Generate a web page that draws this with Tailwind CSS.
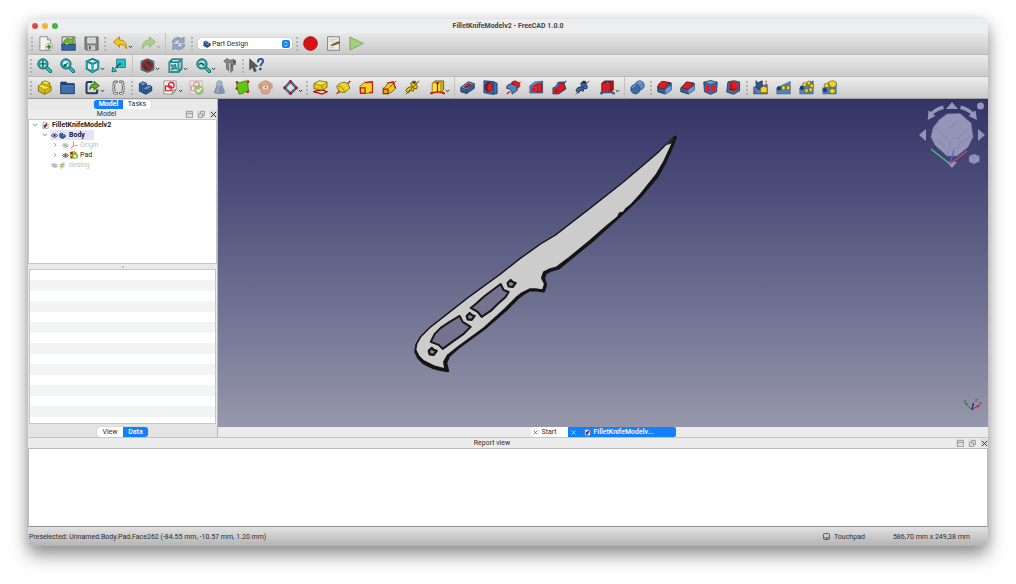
<!DOCTYPE html>
<html lang="en">
<head>
    <meta charset="UTF-8">
    <meta name="viewport" content="width=device-width, initial-scale=1.0">
    <title>FilletKnifeModelv2 - FreeCAD 1.0.0</title>
    <script src="https://cdn.jsdelivr.net/npm/@tailwindcss/browser@4"></script>
</head>
<body class="h-screen overflow-hidden bg-[#fefefe] px-7 pt-[19px] pb-[38px] font-['Roboto',sans-serif] text-[7px] leading-[10px] text-[#2e2e2e]">

    <!-- Icon set, all on a 16x16 grid -->
    <svg class="hidden" aria-hidden="true">
        <symbol id="new" viewBox="0 0 16 16"><path d="M2 .8h8l3.4 3.5v11H2z" fill="#f3f3f1" stroke="#777" stroke-width=".8"/><path d="M10 .8v3.5h3.4" fill="#ccc" stroke="#777" stroke-width=".7"/><circle cx="11.7" cy="11.5" r="3.8" fill="#e8efe2" stroke="#8a8a8a" stroke-width=".6"/><path d="M11.7 9v5M9.200 11.5h5" stroke="#457a1c" stroke-width="1.7"/></symbol>
        <symbol id="open" viewBox="0 0 16 16"><path d="M1.2 1h13.6v10H1.2z" fill="#e9ecef" stroke="#333" stroke-width=".8"/><path d="M2.5 8C3.500 2.2 7.500 1.5 10 3.800l3-2V9.500L6.500 9l2-1.700C7 5.800 5.400 6 4.300 9z" fill="#6cc11c" stroke="#285b08" stroke-width=".7"/><path d="M.8 8.800h3.500q3 2.500 6.500 0h4.400v6.400H.8z" fill="#3465a4" stroke="#173563" stroke-width=".8"/></symbol>
        <symbol id="save" viewBox="0 0 16 16"><path d="M1 1h14v14H2.2L1 13.8z" fill="#818582" stroke="#555" stroke-width=".8"/><path d="M3.5 1.5h9v6.300h-9z" fill="#e5e5e5"/><path d="M5 3.5h6M5 5.5h6" stroke="#aaa" stroke-width=".7"/><path d="M4 10h8v5H4z" fill="#c9cbc9"/><path d="M5.3 11h2v3h-2z" fill="#555"/></symbol>
        <symbol id="undo" viewBox="0 0 16 16"><path d="M.6 6.2 7 .8v3.4c5 0 7.6 3.6 7.4 9.6-1.8-4-3.8-5-7.4-4.8v3z" fill="#f5c720" stroke="#9c7500" stroke-width=".8" stroke-linejoin="round"/></symbol>
        <symbol id="redo" viewBox="0 0 16 16"><path d="M15.4 6.2 9 .8v3.4c-5 0-7.6 3.6-7.4 9.6C3.400 9.800 5.400 8.800 9 9v3z" fill="#a9d288" stroke="#86ad6d" stroke-width=".8" stroke-linejoin="round"/></symbol>
        <symbol id="refresh" viewBox="0 0 16 16"><path d="M1.200 7C1.500 1.800 8 .2 11.500 3L14 1v6.200H8L9.700 5C7.300 3.200 4.300 4.500 4 7z" fill="#93a9c7" stroke="#7086a8" stroke-width=".7"/><path d="M14.800 9c-.3 5.200-6.800 6.800-10.300 4L2 15V8.800h6L6.300 11c2.400 1.800 5.400.5 5.700-2z" fill="#93a9c7" stroke="#7086a8" stroke-width=".7"/></symbol>
        <symbol id="record" viewBox="0 0 16 16"><circle cx="8" cy="8" r="7.300" fill="#dc0f14" stroke="#8f1010" stroke-width=".9"/></symbol>
        <symbol id="macro" viewBox="0 0 16 16"><path d="M1.700.8h12.600v14.400H1.700z" fill="#ecece9" stroke="#71756f" stroke-width=".9"/><path d="M4 3.500h8M4 5.500h5M4 12.500h5" stroke="#bbb" stroke-width=".8"/><path d="m5.300 10.200 1.200-1.200L13 6.200l1.200.2-.4 1.400-6 2z" fill="#c98514" stroke="#3b2b12" stroke-width=".7"/></symbol>
        <symbol id="play" viewBox="0 0 16 16"><path d="M.9 1v14L15.300 8z" fill="#9fd07a" stroke="#7ba45f" stroke-width=".9" stroke-linejoin="round"/></symbol>
        <symbol id="lens" viewBox="0 0 16 16"><path d="m10 10 4.300 4.200" stroke="#06474c" stroke-width="3.600" stroke-linecap="round"/><path d="m10 10 4.300 4.200" stroke="#20cfd2" stroke-width="2.200" stroke-linecap="round"/><circle cx="6.300" cy="6.300" r="5.500" fill="#18b4b9" stroke="#06474c" stroke-width=".8"/><circle cx="6.300" cy="6.300" r="3.800" fill="#d5eeee" stroke="#0a6a70" stroke-width=".5"/></symbol>
        <symbol id="fit" viewBox="0 0 16 16"><use href="#lens"/><path d="M6.300 2.600v7.400M2.600 6.300H10" stroke="#086067" stroke-width="1.500"/></symbol>
        <symbol id="fitsel" viewBox="0 0 16 16"><use href="#lens"/><path d="M3 9.600 4.500 6l1 1L8 4.800l.8.900L6.600 8.200l1 1z" fill="#086067"/></symbol>
        <symbol id="zoomsel" viewBox="0 0 16 16"><use href="#lens"/><path d="M3 6.500c1-2 4-2.200 5-.5l1-.6v2.800H6.300l.8-.8C6 6.300 4.500 6.700 4 8z" fill="#086067"/></symbol>
        <symbol id="iso" viewBox="0 0 16 16"><path d="m8 1 6.200 2.500v8L8 15l-6.200-3.500v-8z" fill="#dceeee" stroke="#064c52" stroke-width="1.900"/><path d="m2 3.700 6 2.600 6-2.600M8 6.300V15" fill="none" stroke="#064c52" stroke-width="1.900"/><path d="m8 1 6.200 2.500v8L8 15l-6.200-3.500v-8zM2 3.700l6 2.600 6-2.600M8 6.300V15" fill="none" stroke="#2bbdc1" stroke-width=".9"/></symbol>
        <symbol id="align" viewBox="0 0 16 16"><path d="M6 1.200h9.300v9H6z" fill="#1fc3c7" stroke="#087277" stroke-width=".8"/><path d="m9.700 6-5 5" stroke="#064c52" stroke-width="1.300"/><path d="m8.300 5.200 2.300.4.300 2.200z" fill="#064c52"/><path d="m1 14.800.8-5 4.300 4.200z" fill="#1fc3c7" stroke="#064c52" stroke-width=".7"/></symbol>
        <symbol id="drawstyle" viewBox="0 0 16 16"><path d="m8 .8 6.800 2.700v9L8 15.300l-6.800-2.800v-9z" fill="#27b6ba" stroke="#064c52" stroke-width=".8"/><circle cx="8" cy="8" r="5" fill="#2c4345" stroke="#7c0b0b" stroke-width="2.300"/><circle cx="8" cy="8" r="5" fill="none" stroke="#dc1616" stroke-width="1.500"/><path d="m4.400 4.400 7.200 7.200" stroke="#dc1616" stroke-width="1.800"/></symbol>
        <symbol id="boxsel" viewBox="0 0 16 16"><path d="M1.500 4.500h9.700V15H1.500zM1.500 4.500l3-3.200h10l-3.300 3.200M14.500 1.300v10L11.200 15" fill="#cfe7e6" stroke="#064c52" stroke-width="1.700"/><path d="M1.500 4.500h9.700V15H1.500zM1.500 4.500l3-3.200h10l-3.300 3.200M14.500 1.300v10L11.200 15" fill="none" stroke="#2bbdc1" stroke-width=".8"/><path d="m3.500 7 2 1L8 6.500l.5 3 1 2.500-3-.5-2.500 1.500.5-3z" fill="#4ea6a9" stroke="#0b6066" stroke-width=".8"/></symbol>
        <symbol id="measure" viewBox="0 0 16 16"><path d="M1.800 3.600 4.300.9h2l1 1.200h4l1-1.200v2h2v4.300h-2.800v6.300l-2.200 1.800V4.700H7.200v9l-2.400-2V5.600z" fill="#848884" stroke="#4a4d4a" stroke-width=".6"/><path d="M12 5h2.500M12 3h2.500M10 7.500h1.200M10 9.500h1.200" stroke="#222" stroke-width=".9"/></symbol>
        <symbol id="whatsthis" viewBox="0 0 16 16"><path d="M.7 1v11.500l2.900-2.700 2 4.900 2.200-.9L5.900 9h3.700z" fill="#555a56" stroke="#363936" stroke-width=".6"/><path d="M9.500 4.600c0-5 6-4.400 5.400-.9-.4 2.300-2.500 2.400-2.700 5" fill="none" stroke="#204a87" stroke-width="2.200"/><path d="M9.500 4.600c0-5 6-4.400 5.400-.9-.4 2.300-2.500 2.400-2.700 5" fill="none" stroke="#5d8ac0" stroke-width=".7"/><circle cx="12.100" cy="11.800" r="1.400" fill="#204a87"/></symbol>
        <symbol id="part" viewBox="0 0 16 16"><path d="m1.500 6.300 3.200-1.600L5 2.500 8.500.9l5.200 2.300v3l1.300.8v4.700l-6.800 3.600L1.500 12z" fill="#d8b905" stroke="#564900" stroke-width=".7" stroke-linejoin="round"/><path d="m5 2.500 3.500-1.600 5.200 2.300L10 5zM1.500 6.300 5 4.800l4.200 1.800L15 7l-6.800 3.200z" fill="#fbe84a" stroke="#6a5a00" stroke-width=".4"/><path d="M8.200 10.200v5" stroke="#6a5a00" stroke-width=".6"/></symbol>
        <symbol id="group" viewBox="0 0 16 16"><path d="M.8 2.200h6l1 1.500h7.400V14.500H.8z" fill="#23477c" stroke="#172f55" stroke-width=".7"/><path d="M.8 5.500h14.400v9H.8z" fill="#3f70ae" stroke="#1b3b69" stroke-width=".7"/><path d="M1.500 6.200h13" stroke="#6b97cb" stroke-width=".7"/></symbol>
        <symbol id="link" viewBox="0 0 16 16"><path d="M8 2.200H3.200Q1.600 2.200 1.600 4v8.500q0 1.700 1.700 1.700h8q1.700 0 1.700-1.700v-2.300" fill="none" stroke="#223e63" stroke-width="2.200"/><path d="M5 10.200C5.100 5.800 7 4.500 9.700 4.600V1.400l5.500 4.700-5.500 4.500V7.800C7.500 7.700 6.300 8 5 10.200z" fill="#63b21a" stroke="#224d07" stroke-width=".8"/></symbol>
        <symbol id="varset" viewBox="0 0 16 16"><path d="M6 1.800H5Q3.200 1.800 3.200 4v2Q3.200 8 1.500 8q1.700 0 1.700 2v2q0 2.200 1.800 2.200h1M10 1.800h1q1.800 0 1.800 2.200v2q0 2 1.700 2-1.700 0-1.700 2v2q0 2.200-1.800 2.200h-1" fill="none" stroke="#3e413e" stroke-width="2.700" stroke-linecap="round"/><path d="M6 1.800H5Q3.200 1.800 3.200 4v2Q3.200 8 1.500 8q1.700 0 1.700 2v2q0 2.200 1.800 2.200h1M10 1.800h1q1.800 0 1.800 2.200v2q0 2 1.700 2-1.700 0-1.700 2v2q0 2.200-1.800 2.200h-1" fill="none" stroke="#f2f2f2" stroke-width="1.200" stroke-linecap="round"/></symbol>
        <symbol id="body" viewBox="0 0 16 16"><path d="m1.500 4 3.700-2L9 3.700v3.200l2.500-1.300 3.200 1.600v4.300l-6.300 3.700-6.900-3.300z" fill="#2d5b98" stroke="#132b4e" stroke-width=".8" stroke-linejoin="round"/><path d="m1.500 4 3.700-2L9 3.700 5.300 5.800zM5.300 9 9 6.900l2.500-1.300 3.200 1.600-6.300 3.400z" fill="#6d9ccc" stroke="#1d3d6a" stroke-width=".5"/><path d="M8.400 10.600v4.500" stroke="#193359" stroke-width=".7"/></symbol>
        <symbol id="sketch" viewBox="0 0 16 16"><path d="M1 1h13v9.500L10 15H1z" fill="#f2efef" stroke="#807d7d" stroke-width=".8"/><path d="M10 15v-4.500h4z" fill="#b9b9b9" stroke="#555" stroke-width=".5"/><path d="M2.600 6.500h6v5h-6z" fill="none" stroke="#d2191d" stroke-width="1.200"/><circle cx="8.800" cy="5.500" r="3" fill="none" stroke="#d2191d" stroke-width="1.300"/></symbol>
        <symbol id="validate" viewBox="0 0 16 16"><path d="M1 1h13v14H1z" fill="#eee8e6" stroke="#b5afaf" stroke-width=".8"/><path d="M2.500 6.500h6v5h-6z" fill="none" stroke="#e58b8b" stroke-width="1.100"/><circle cx="8" cy="5" r="3" fill="none" stroke="#e58b8b" stroke-width="1.200"/><circle cx="10.500" cy="10.600" r="4.500" fill="#98ca75" stroke="#77a65b" stroke-width=".6"/><path d="m8 10.500 2 2 3.300-4" fill="none" stroke="#f1f8ed" stroke-width="1.500"/></symbol>
        <symbol id="check" viewBox="0 0 16 16"><path d="M4.800 6h6.400c.2 3 2.300 4.500 2.300 7.500q-5.500 2.500-11 0c0-3 2.100-4.500 2.300-7.500z" fill="#8095b3" stroke="#71839e" stroke-width=".6"/><circle cx="8" cy="3.800" r="3.200" fill="#a4b5cb" stroke="#8393aa" stroke-width=".5"/><path d="M7 7c0 3-1.500 4-1.500 6.500" fill="none" stroke="#a9b7cb" stroke-width="1.300"/></symbol>
        <symbol id="binder" viewBox="0 0 16 16"><path d="M1.800 2c3.500 2.500 6-1.500 12.700-1-1.500 4-.5 7 .2 11.400-4-1.500-5.500 3-10.500 2.500.8-3-2.200-3.800-3-6C3.200 7 1.300 5 1.800 2z" fill="#61c513" stroke="#2c6908" stroke-width=".8"/><g fill="#d91616"><circle cx="2" cy="2.300" r="1.300"/><circle cx="14" cy="1.800" r="1.400"/><circle cx="1.900" cy="9" r="1.300"/><circle cx="13.500" cy="12.700" r="1.300"/></g></symbol>
        <symbol id="clone" viewBox="0 0 16 16"><path d="M4 2.200Q8-.8 12 2.200l3.200 2.600v4L12.800 9v3q-.5 3-4.800 3t-4.800-3V9L.8 8.800v-4z" fill="#dca583" stroke="#a88169" stroke-width=".6"/><path d="M5 7q3-2 6 0v2Q8 11 5 9z" fill="#f0e2da"/><circle cx="8.200" cy="8" r="1" fill="#56799c"/><path d="M3.500 4v5M12.500 4v5" stroke="#a88169" stroke-width=".8"/></symbol>
        <symbol id="datum" viewBox="0 0 16 16"><path d="m8 1.500 6.300 7L8 14.500l-6.300-6z" fill="none" stroke="#172f55" stroke-width="2.300"/><path d="m8 1.500 6.300 7L8 14.500l-6.300-6z" fill="none" stroke="#5687bd" stroke-width="1.200"/><g fill="#df1515" stroke="#8a0a0a" stroke-width=".4"><circle cx="8" cy="1.600" r="1.300"/><circle cx="14.200" cy="8.300" r="1.300"/><circle cx="8" cy="14.300" r="1.300"/><circle cx="1.800" cy="8.300" r="1.300"/></g></symbol>
        <symbol id="pad" viewBox="0 0 16 16"><path d="M1 12.500 5 11h6.500l3.500 1.600-5.300 2.400z" fill="none" stroke="#b90f12" stroke-width="1.400"/><path d="m1 4 5.500-3L15 2.200v5.500l-5.300 3.400L1 9.200z" fill="#e3c81b" stroke="#514600" stroke-width=".7"/><path d="m1 4 5.500-3L15 2.200 9.700 5.500z" fill="#fbe84a" stroke="#685900" stroke-width=".5"/><path d="M9.700 5.500v5.600" stroke="#685900" stroke-width=".6"/></symbol>
        <symbol id="revolution" viewBox="0 0 16 16"><path d="M12 4 15.400 1" stroke="#c21417" stroke-width="1.300"/><path d="M.8 6.500C3.500 3.500 6 3 8.500 2.500c3-.3 5.500 2 6 6.500L9 13.500c-2-.8-4 0-6-1z" fill="#e8cc1b" stroke="#564900" stroke-width=".7"/><path d="M1.500 6.500c4 0 7 2.500 7.500 6.700" fill="none" stroke="#937f06" stroke-width=".7"/><path d="M5 4.200c4 0 6.500 2.500 7.200 6" fill="none" stroke="#faeb6b" stroke-width="1"/><path d="M.6 14.700 4 12" stroke="#c21417" stroke-width="1.300"/></symbol>
        <symbol id="loft" viewBox="0 0 16 16"><path d="m1 6.500 5-4 8.500-1v12L6.500 14.500H1.500z" fill="#efd326" stroke="#5f5000" stroke-width=".7"/><path d="M6 3 14.300 2v11.500L11 13" fill="none" stroke="#c21417" stroke-width="1.200"/><path d="M1.500 8.500h5v5.500h-5z" fill="#e8ce23" stroke="#c21417" stroke-width="1.300"/></symbol>
        <symbol id="pipe" viewBox="0 0 16 16"><path d="M1 9Q5 7.500 6 3l6-1 2.500 7Q12 12 7 14.800z" fill="#e8cc1b" stroke="#564900" stroke-width=".8"/><path d="M6 3.200 12 2l2.500 7" fill="none" stroke="#c21417" stroke-width="1.200"/><path d="M1.300 9.700h5.200v4.800H1.300z" fill="#d9ae12" stroke="#b90f12" stroke-width="1.200"/><path d="m8 8 7-7" stroke="#8b1111" stroke-width=".8"/></symbol>
        <symbol id="helix" viewBox="0 0 16 16"><path d="M6 3.500Q9 0 11.500 1.500l.3 3Q14 6.500 12.500 9.500L9.500 9l-.7 3-3-1-2.300 3-2.500-2.500Q2 7.500 6 7.300l1.200-1z" fill="#e3c81b" stroke="#564900" stroke-width=".9" stroke-linejoin="round"/><circle cx="9.500" cy="2.700" r="1.400" fill="#4b4314"/><path d="M6 7.300q3-1 3.500 1.700" fill="none" stroke="#564900" stroke-width=".7"/><path d="M.8 15.300 15.200.9" stroke="#c21417" stroke-width="1"/></symbol>
        <symbol id="prim" viewBox="0 0 16 16"><path d="M2.500 3.300 5.500 1h9v9.500l-3.200 3H2.500z" fill="#cdb11b" stroke="#564900" stroke-width=".8"/><path d="M2.500 3.300h8.800v10.200H2.500z" fill="#f7e239" stroke="#827000" stroke-width=".5"/><path d="M8 3.500v9L1.500 14M8 12.500l6.700 1.300" fill="none" stroke="#c21417" stroke-width="1.300"/><g fill="#c21417"><circle cx="8" cy="3.500" r="1.400"/><circle cx="1.500" cy="14" r="1.300"/><circle cx="14.500" cy="14" r="1.300"/></g></symbol>
        <symbol id="pocket" viewBox="0 0 16 16"><path d="M.8 8 9 2l6.200 2v5L7 14.500l-6.200-2z" fill="#315f9c" stroke="#122a4d" stroke-width=".8"/><path d="M.8 8 9 2l6.200 2L7 10z" fill="#769fcf" stroke="#1c3b67" stroke-width=".6"/><path d="M4.500 7.400 9 4l3.200 1L7.500 8.500z" fill="#df171b" stroke="#640b0e" stroke-width=".7"/><path d="M7 10v4.500" stroke="#122a4d" stroke-width=".6"/></symbol>
        <symbol id="hole" viewBox="0 0 16 16"><path d="M1 .8 11 1.700l4 1.800v11l-5 .8L1 13.500z" fill="#3d6fad" stroke="#122a4d" stroke-width=".8"/><path d="M11 1.700v13.500" stroke="#122a4d" stroke-width=".6"/><ellipse cx="6.200" cy="7.500" rx="4" ry="5" fill="#881013" stroke="#122a4d" stroke-width=".7"/><path d="M6.500 3.500c5 1 4.500 8 0 8.700-2.300-2-2-7 0-8.700z" fill="#e5191e"/></symbol>
        <symbol id="groove" viewBox="0 0 16 16"><path d="m12 5 3.500-3" stroke="#c21417" stroke-width="1.200"/><path d="M.8 6.500C4 3.500 7 3.500 9.500 5.500q3 2 2.500 5.500l-5.500 4C6.500 11 4 9 .8 9z" fill="#5584bd" stroke="#122a4d" stroke-width=".8"/><path d="M6 2.500C9-.3 14 1 15 6.500l-2.500 2.300C11.500 5.500 9.500 4.400 6.500 4.700z" fill="#e5191e" stroke="#680d10" stroke-width=".7"/><path d="m.8 15 3.500-2.700" stroke="#c21417" stroke-width="1.200"/></symbol>
        <symbol id="subloft" viewBox="0 0 16 16"><path d="m1 6.300 5-4 8.500-1v12.500H1z" fill="#6793c7" stroke="#122a4d" stroke-width=".7"/><path d="m4 6.500 5.300-2.500L13.500 3v9.500L8 13z" fill="#e5191e" stroke="#780d10" stroke-width=".6"/><path d="M2.300 7.800H7.500V13H2.300z" fill="#dd171b" stroke="#4777b4" stroke-width=".9"/></symbol>
        <symbol id="subpipe" viewBox="0 0 16 16"><path d="M1 8.500C5 7 5.500 4.500 6.300 2.500l6-.5 2.500 7.500-7.500 5.300H1z" fill="#4777b4" stroke="#122a4d" stroke-width=".8"/><path d="M3 9.500c4-1 5-4 5.400-6.500l3.600.5 2 6L7 13z" fill="#e5191e" stroke="#780d10" stroke-width=".6"/><path d="M2.200 9.900h5v4h-5z" fill="#cc1418"/><path d="m12 4 3.200-3" stroke="#173563" stroke-width="1.200"/></symbol>
        <symbol id="subhelix" viewBox="0 0 16 16"><path d="M6 3.500Q9 0 11.500 1.500l.3 3Q14 6.500 12.500 9.500L9.500 9l-.7 3-3-1-2.300 3-2.500-2.500Q2 7.500 6 7.300l1.200-1z" fill="#3c6baa" stroke="#122a4d" stroke-width=".9" stroke-linejoin="round"/><circle cx="9.500" cy="2.700" r="1.400" fill="#122a4d"/><path d="M6 7.300q3-1 3.500 1.700" fill="none" stroke="#122a4d" stroke-width=".7"/><path d="M.8 15.300 15.200.9" stroke="#c21417" stroke-width="1"/></symbol>
        <symbol id="subprim" viewBox="0 0 16 16"><path d="M2 3.300 5 1h9.200v9.500l-3 3H2z" fill="#b91317" stroke="#5e0c0f" stroke-width=".8"/><path d="M2 3.300h9v10.200H2z" fill="#e5191e" stroke="#780d10" stroke-width=".5"/><path d="M8 3.500v9L1.500 14M8 12.500l6.500 1.500" fill="none" stroke="#315f9c" stroke-width="1.300"/><g fill="#4777b4" stroke="#122a4d" stroke-width=".4"><circle cx="8" cy="3.500" r="1.400"/><circle cx="1.500" cy="14" r="1.300"/><circle cx="14.300" cy="14" r="1.300"/><circle cx="8" cy="12.300" r="1.300"/></g></symbol>
        <symbol id="boolean" viewBox="0 0 16 16"><circle cx="10.300" cy="5.800" r="4.900" fill="#5d8bc4" stroke="#1f4070" stroke-width=".7"/><circle cx="5.800" cy="9.800" r="5" fill="#3a6aa9" stroke="#1f4070" stroke-width=".7"/><path d="M2.500 8.500c.7-2 2.300-2.600 4-2.500M8.500 2.600c1.500-.8 3-.4 4 .5" fill="none" stroke="#8eb2dc" stroke-width="1"/></symbol>
        <symbol id="fillet" viewBox="0 0 16 16"><path d="M.8 7 6 1.500l9.200 1.700v7.500L9 15 .8 12.500z" fill="#315f9c" stroke="#122a4d" stroke-width=".8"/><path d="M.8 8C1.200 4 3.500 1.500 6.500 1.500l8 1.500C10.500 3.500 9 6 8.800 9.700z" fill="#e5191e" stroke="#690c0f" stroke-width=".6"/><path d="M9 9.700 15.200 6v4.700L9 15z" fill="#6f9aca"/></symbol>
        <symbol id="chamfer" viewBox="0 0 16 16"><path d="M.8 8.500 7 2l8.200 1.400v7.300L9 15 .8 12.500z" fill="#315f9c" stroke="#122a4d" stroke-width=".8"/><path d="m1.500 8.300 5.700-6.200 7.300 1.300-5.800 6.500z" fill="#e5191e" stroke="#690c0f" stroke-width=".6"/><path d="M9 10.500 15.200 6v4.700L9 15z" fill="#6f9aca"/></symbol>
        <symbol id="draft" viewBox="0 0 16 16"><path d="M.8 2.500 8 .7l7.200 1.800-.8 10L8 15.300l-6.400-2.800z" fill="#3e6da9" stroke="#122a4d" stroke-width=".8"/><path d="m.8 2.500 7.200 2 7.200-2L8 .7z" fill="#7da5d2" stroke="#122a4d" stroke-width=".5"/><path d="m3 5.200 4.200 1.100v6.700L3.500 11.600zM8.800 6.300l4.200-1.100-.5 6.400-3.700 1.400z" fill="#e5191e"/></symbol>
        <symbol id="thick" viewBox="0 0 16 16"><path d="m2 2 6-1.300L14.500 2v9.500L8 15.300.8 12.800z" fill="#3e6da9" stroke="#122a4d" stroke-width=".8"/><path d="m4 2.700 5-.6 4 1v6.600l-5 2.200-4.500-1.300z" fill="#b61519"/><path d="m6.200 2.600 6.300.6v6L6 8.400z" fill="#e5191e"/><path d="M3.300 10.700 6 8.400" stroke="#650b0e" stroke-width=".7"/></symbol>
        <symbol id="mirror" viewBox="0 0 16 16"><path d="M.8 7.500 15.200 5v9.800H.8z" fill="#5382bb" stroke="#173563" stroke-width=".6"/><path d="m3 .8 2.300 2 4.500-2 .2 5.500-3 4-3.500-2z" fill="#2b568f" stroke="#122a4d" stroke-width=".7"/><path d="M8 8.500Q11.500 5 15 8.500v5H8z" fill="#efd326" stroke="#655600" stroke-width=".6"/><path d="M14 .8v5M1 14l3-2" stroke="#c21417" stroke-width="1" stroke-dasharray="2 1"/></symbol>
        <symbol id="linear" viewBox="0 0 16 16"><path d="M.8 8.500 11 3.500l4.200-2v13.300H.8z" fill="#5382bb" stroke="#315f9c" stroke-width=".6"/><path d="m1 7.500 2-1 2.200 1v3l-2 1L1 10.300z" fill="#1d406f"/><g fill="#efd326" stroke="#574a00" stroke-width=".6"><path d="m6 7 1.900-1 2 1v2.700l-1.900.9-2-.9zM11 7l1.900-1 2 1v2.700l-1.900.9-2-.9z"/></g></symbol>
        <symbol id="polar" viewBox="0 0 16 16"><path d="M.8 8.500 11 2l4.200-1v13.800H.8z" fill="#5382bb" stroke="#315f9c" stroke-width=".6"/><path d="m1 6.800 2-1 2.200 1v3l-2 1L1 9.600z" fill="#1d406f"/><g fill="#efd326" stroke="#574a00" stroke-width=".6"><path d="m4 3.500 2-1 2 1V6L6 7 4 6zM8.500 2l2-1 2 1v2.500l-2 1-2-1zM11.500 5l2-1 2 1v2.500l-2 1-2-1zM10.500 9l2-1 2 1v2.500l-2 1-2-1zM6 10l2-1 2 1v2.500l-2 1-2-1z"/></g></symbol>
        <symbol id="multi" viewBox="0 0 16 16"><path d="M.8 8.500 15.200 4v10.800H.8z" fill="#5382bb" stroke="#315f9c" stroke-width=".6"/><path d="m1 9.300 2-1 2.200 1v3l-2 1L1 12.100z" fill="#1d406f"/><g fill="#efd326" stroke="#574a00" stroke-width=".6"><path d="m2.500 4.500 2.700-1.200L8 4.500V7L5.300 8.200 2.500 7zM7 2l4.500-1.300 3.700 1.500v4L11.500 8 7 6.300zM8 10.500l3-1.400 3.200 1.400v2.600L11 14.700l-3-1.500z"/></g></symbol>
        <symbol id="doc" viewBox="0 0 16 16"><path d="M2 1h9l3 3v11H2z" fill="#f4f4f4" stroke="#666"/><path d="M4 6h5l2-3v5l-3 5H4z" fill="#24477c"/><path d="M7 4.500 12 3v5l-4 1z" fill="#cf191c"/></symbol>
        <symbol id="eye" viewBox="0 0 16 10"><path d="M1 5q7-8 14 0-7 8-14 0z" fill="none" stroke="currentColor" stroke-width="1.700"/><circle cx="8" cy="5" r="2.500" fill="currentColor"/></symbol>
        <symbol id="eyeoff" viewBox="0 0 16 10"><path d="M1 5q7-8 14 0-7 8-14 0zM2 1l12 8" fill="none" stroke="currentColor" stroke-width="1.500"/><circle cx="8" cy="5" r="2" fill="none" stroke="currentColor"/></symbol>
        <symbol id="origin" viewBox="0 0 16 16"><path d="M7 9V1" stroke="#6d7ebc" stroke-width="1.500"/><path d="m7 9-5.500 6" stroke="#cb6b6b" stroke-width="2"/><path d="M7 9h8.500" stroke="#80b880" stroke-width="1.600"/></symbol>
        <symbol id="padtree" viewBox="0 0 16 16"><path d="m1 5 5-4 6 1v9l-5 3-6-2z" fill="#e3c81b" stroke="#8b7500"/><path d="M.5 1.500h5v5h-5zM1 11h4v4H1z" fill="#b61b1b"/><path d="M5 6.500 10 4l5 3v6l-5 2.500-5-2z" fill="#8fce3b" stroke="#4b8a12"/><path d="M7.500 8.500h5V13h-5z" fill="#f6f8ea"/></symbol>
        <symbol id="sketchtree" viewBox="0 0 16 16"><path d="m3 5 9-4v10l-9 4z" fill="#b9dc9e" stroke="#9ac17c"/><path d="M5 11V7l5-2" fill="none" stroke="#7da35e" stroke-width="1.500"/></symbol>
        <symbol id="down" viewBox="0 0 6 4"><path d="m1 .8 2 2 2-2" fill="none" stroke="currentColor" stroke-width="1.100"/></symbol>
        <symbol id="right" viewBox="0 0 4 6"><path d="m1 1 2 2-2 2" fill="none" stroke="currentColor" stroke-width=".8"/></symbol>
        <symbol id="cross" viewBox="0 0 8 8"><path d="m1 1 6 6M7 1 1 7" stroke="currentColor" stroke-width="1.100"/></symbol>
        <symbol id="dock" viewBox="0 0 8 8"><path d="M.5.500h7v7h-7zM.5 2.800h7" fill="none" stroke="currentColor" stroke-width=".8"/></symbol>
        <symbol id="float" viewBox="0 0 8 8"><path d="M.6 3h4.500v4.400H.6zM2.900 3V.6h4.500v4.500H5.100" fill="none" stroke="currentColor" stroke-width=".8"/></symbol>
    </svg>

    <div class="flex h-full flex-col overflow-hidden rounded-[6px] bg-[#ececec] shadow-[0_9px_17px_rgba(0,0,0,0.42),0_0_12px_rgba(0,0,0,0.1)]">

        <header class="relative flex h-[14px] shrink-0 items-center justify-center bg-[#eceef0]">
            <div class="absolute left-1 flex gap-1">
                <button type="button" aria-label="Close" class="grid size-[6px] place-items-center rounded-full bg-[#ee4b45] text-[#7c1511]"><svg class="size-[3px]"><use href="#cross"/></svg></button>
                <button type="button" aria-label="Minimize" class="size-[6px] rounded-full bg-[#f4b33c]"></button>
                <button type="button" aria-label="Zoom" class="size-[6px] rounded-full bg-[#3fb63d]"></button>
            </div>
            <h1 class="font-bold text-[#454545]">FilletKnifeModelv2 - FreeCAD 1.0.0</h1>
        </header>

        <div class="flex h-[22px] shrink-0 items-center border-b border-[#b9b9b9] bg-linear-to-b from-[#e9e9e9] to-[#c9c9c9] pl-[2px]">
            <div class="flex items-center" data-tools="| new open save | undo+ redo- : refresh |"></div>
            <div class="relative mr-[3px] ml-1 flex h-[11px] w-[94px] items-center rounded-[3px] bg-white shadow-[0_0_1px_rgba(0,0,0,0.4)]">
                <svg class="pointer-events-none absolute left-[5px] size-2"><use href="#body"/></svg>
                <select aria-label="Workbench" class="h-full w-full appearance-none bg-transparent pl-[14px] outline-none">
                    <option>Part Design</option>
                    <option>Part</option>
                    <option>Sketcher</option>
                </select>
                <span class="pointer-events-none absolute right-[2px] grid size-2 place-items-center rounded-[2px] bg-[#1380fb]">
                    <svg class="size-[6px]" viewBox="0 0 6 6"><path d="m1.500 2.300 1.500-1.500 1.500 1.500M1.500 3.700 3 5.200l1.500-1.500" fill="none" stroke="#fff" stroke-width=".8"/></svg>
                </span>
            </div>
            <div class="flex items-center" data-tools="| record macro play"></div>
        </div>
        <div class="flex h-[22px] shrink-0 items-center border-b border-[#b9b9b9] bg-linear-to-b from-[#ececec] to-[#cacaca] pl-px" data-tools="| fit fitsel iso+ align : drawstyle+ boxsel+ zoomsel+ measure | whatsthis"></div>
        <div class="flex h-[22px] shrink-0 items-center border-b border-[#9c9c9c] bg-linear-to-b from-[#ececec] to-[#cacaca] pl-px" data-tools="| part group link+ varset | body sketch+ validate check binder clone datum+ | pad revolution loft pipe helix prim+ : pocket hole groove subloft subpipe subhelix subprim+ : boolean | fillet chamfer draft thick | mirror linear polar multi"></div>

        <main class="flex min-h-0 flex-1">
            <aside class="flex w-[190px] shrink-0 flex-col border-r border-[#b5b5b5] bg-[#e9e9e9]">
                <div class="mx-auto mt-px flex h-[9px] w-[57px] rounded-[3px] bg-white text-center shadow-[0_0_1px_rgba(0,0,0,0.4)]">
                    <button type="button" class="w-[29px] rounded-l-[3px] bg-[#1380fb] leading-[9px] font-bold text-white">Model</button>
                    <button type="button" class="flex-1 leading-[9px]">Tasks</button>
                </div>
                <div class="flex h-[10px] items-center bg-[#ececec]">
                    <h2 class="flex-1 text-center">Model</h2>
                    <div class="flex gap-1 text-[#888]" data-dock></div>
                </div>

                <ul class="h-[145px] border border-[#c6c6c6] bg-white text-[#222]">
                    <li class="flex h-[10px] items-center pl-[3px]">
                        <svg class="mr-1 h-1 w-[6px] text-[#aaa]"><use href="#down"/></svg>
                        <svg class="mr-[3px] size-[7px]"><use href="#doc"/></svg>
                        <b class="font-bold">FilletKnifeModelv2</b>
                    </li>
                    <li class="flex h-[10px] items-center pl-[13px]">
                        <svg class="mr-[2px] h-1 w-[6px] text-[#aaa]"><use href="#down"/></svg>
                        <span class="flex h-full w-[44px] items-center gap-px bg-[#e4e3fb] pl-px">
                            <svg class="h-[5px] w-[7px]"><use href="#eye"/></svg>
                            <svg class="mr-[2px] size-[7px]"><use href="#body"/></svg>
                            <b class="font-bold">Body</b>
                        </span>
                    </li>
                    <li class="flex h-[10px] items-center gap-px pl-6 text-[#c0c0c0]">
                        <svg class="mr-1 h-[6px] w-1 text-[#999]"><use href="#right"/></svg>
                        <svg class="h-[5px] w-[7px] text-[#888]"><use href="#eyeoff"/></svg>
                        <svg class="mr-px size-2"><use href="#origin"/></svg>
                        Origin
                    </li>
                    <li class="flex h-[10px] items-center gap-px pl-6">
                        <svg class="mr-1 h-[6px] w-1 text-[#999]"><use href="#right"/></svg>
                        <svg class="h-[5px] w-[7px]"><use href="#eye"/></svg>
                        <svg class="mr-px size-2"><use href="#padtree"/></svg>
                        Pad
                    </li>
                    <li class="flex h-[10px] items-center gap-px pl-[22px] text-[#c0c0c0]">
                        <svg class="h-[5px] w-[7px] text-[#888]"><use href="#eyeoff"/></svg>
                        <svg class="mr-[2px] size-[7px]"><use href="#sketchtree"/></svg>
                        desing
                    </li>
                </ul>
                <div class="grid h-[5px] place-items-center"><span class="size-[2px] rounded-full bg-[#bbb]"></span></div>
                <!-- property rows, none filled in -->
                <div class="mx-px min-h-0 flex-1 border border-[#c6c6c6] bg-[repeating-linear-gradient(#fff_0_10px,#f3f5f5_10px_21px)]"></div>
                <div class="flex h-[13px] items-end justify-center bg-[#e4e4e4]">
                    <div class="flex h-[10px] w-[51px] rounded-[3px] bg-white text-center shadow-[0_0_1px_rgba(0,0,0,0.4)]">
                        <button type="button" class="flex-1">View</button>
                        <button type="button" class="w-[25px] rounded-r-[3px] bg-[#1380fb] font-medium text-white">Data</button>
                    </div>
                </div>
            </aside>

            <section class="flex min-w-0 flex-1 flex-col">
                <div class="relative min-h-0 flex-1 bg-linear-to-b from-[#333366] to-[#9797ab]">
                    <!-- knife -->
                    <svg class="h-full w-full" viewBox="217 99 771 328" stroke-linejoin="round">
                        <path d="M675 137 668 144 657 154 643 166 623 183 590 209 555 236 540 245 519 260 500 275 467 299 430 328 420 338 416 345 415 352 418 358 423 363 433 368 441 370 447 371 445 363 448 356 457 348 483 329 505 310 517 298 522 294 529 290 536 290 543 291 545 285 543 278 545 273 551 270 558 268 569 259 590 242 620 215 640 196 657 176 664 163 670 150z" fill="#151515" stroke="#151515" stroke-width="3"/>
                        <path d="M675 136 668 142 657 153 643 165 623 182 590 208 555 235 540 244 519 259 500 274 467 298 430 327 420 337 416 344 415 350 418 356 423 361 433 366 444 369 443 362 447 355 457 347 483 328 504 309 516 297 521 293 529 289 536 289 542 290 544 284 541 278 543 272 549 269 556 267 568 258 590 240 606 226 617 217 619 213 623 212 625 209 630 205 640 194 656 174 663 162 669 149z" fill="#cccccc" stroke="#151515" stroke-width="1.200"/>
                        <path d="M470 308 475 304 484 296 500 284 503 290 508 292 505 297 497 304 490 311 481 317 477 312zM430 342 434 334 440 328 449 322 459 316 462 322 470 327 463 334 453 341 442 349 438 345z" fill="#737390" stroke="#151515" stroke-width="2"/>
                        <g fill="#85859a" stroke="#151515" stroke-width="2.200"><path d="m507 283 3-3 2 2 3 1-3 4-4-.5z"/><path d="m466 316 3-3 2 2 3 1-3 4-4-.5z"/><path d="m428 351 3-3 2 2 3 1-3 4-4-.5z"/></g>
                        <path d="m666 145 8-8-2.500 6z" fill="#151515"/>
                    </svg>
                    <!-- navigation cube -->
                    <svg class="absolute top-0 right-0 size-[70px]" viewBox="918 99 70 70">
                        <g fill="#9495b8">
                            <path d="m952 102 6 7h-12zM919 135l7-6v12zM985 135l-7-6v12zM947 162h10l-5 6z"/>
                            <circle cx="980.500" cy="106" r="3.500"/>
                            <path d="M943 105.500q-7 1.500-12 6.500l-2.500-1.500-.8 9.500 7.800-4-2.300-2q4.500-3.500 10.800-5zM961 105.500q7 1.500 12 6.500l2.500-1.500 1.500 9.500-8.500-4 2.300-2q-4.500-3.500-10.800-5z"/>
                            <path d="m947 114 13-.5 11 9.500 2 14-5 10-11 9h-10l-12-11-4-8 2-9 6-8z" stroke="#77789f" stroke-width=".6"/>
                            <path d="m969 156 5-2 5.500 2v5.500L974 164l-5-2z" stroke="#5f608f" stroke-width=".6"/>
                        </g>
                        <path d="m933 129 4-1 13 14v5l-3 8M937 128l2-8M950 142l3-4h5l13-12M958 138l2 5-2 5-6 1-2-2M960 143l10-6M969 156l5 2 5.500-2M974 158v6" fill="none" stroke="#7f80a8" stroke-width=".6"/>
                        <path d="m950 128 9-8M937 139l8 8" stroke="#8687a8" stroke-width="1.500" stroke-dasharray="2 1"/>
                        <path d="m931 149 19 15" stroke="#4fc77b" stroke-width="1.200"/>
                        <path d="m950 164 17-13" stroke="#cc4d6e" stroke-width="1.200"/>
                        <path d="m950 164 4-14" stroke="#5d5fee" stroke-width="1.200"/>
                    </svg>
                    <!-- axis cross -->
                    <svg class="absolute right-0 bottom-[10px] h-[22px] w-[30px]" viewBox="958 395 30 22" font-size="4" fill="#333">
                        <path d="m972 410-6-6" stroke="#287f37" stroke-width="1"/><path d="m964.500 402.500 3.500 1-2 2z" fill="#287f37"/>
                        <path d="m972 410 5-3.500" stroke="#b22" stroke-width="1"/><path d="m979.500 404.500-1.300 3.500-2.200-2z" fill="#b22"/>
                        <path d="m972 410 1.500-7" stroke="#23239c" stroke-width="1.300"/>
                        <text x="964" y="402.500">Y</text><text x="975" y="402">Z</text><text x="979" y="404.500">X</text>
                    </svg>
                </div>
                <nav class="flex h-[10px] shrink-0 justify-center bg-[#ebebeb]">
                    <button type="button" class="flex w-[37px] items-center gap-1 rounded-l-[3px] bg-white pl-[2px]"><svg class="size-[5px] text-[#555]"><use href="#cross"/></svg>Start</button>
                    <button type="button" class="flex w-[108px] items-center rounded-r-[2px] bg-[#1380fb] pl-[3px] font-medium text-white"><svg class="mr-2 size-[5px]"><use href="#cross"/></svg><svg class="mr-[3px] size-[7px]"><use href="#doc"/></svg>FilletKnifeModelv...</button>
                </nav>
            </section>
        </main>

        <section class="shrink-0">
            <div class="flex h-[11px] items-center border-t border-[#c4c4c4] bg-[#ececec]">
                <h2 id="report-title" class="flex-1 text-center">Report view</h2>
                <div class="flex gap-1 text-[#888]" data-dock></div>
            </div>
            <textarea aria-labelledby="report-title" readonly class="block h-[79px] w-full resize-none border border-[#b9b9b9] border-b-[#8f8f8f] bg-white outline-none"></textarea>
        </section>

        <footer class="flex h-[19px] shrink-0 items-center bg-linear-to-b from-[#e2e2e2] to-[#b3b3b3] pr-[18px] pl-px">
            <span class="flex-1">Preselected: Unnamed.Body.Pad.Face262 (-84.55 mm, -10.57 mm, 1.20 mm)</span>
            <button type="button" class="mr-7 flex items-center gap-1"><svg class="size-[7px]" viewBox="0 0 8 8"><rect x=".6" y=".6" width="6.800" height="6.800" rx="1.200" fill="none" stroke="#444" stroke-width=".9"/><path d="M.6 5.500h6.800M4 5.500v2" stroke="#444" stroke-width=".8"/></svg>Touchpad</button>
            <span>586,70 mm x 249,38 mm</span>
        </footer>
    </div>

    <script>
        // "|" handle, ":" separator line, "+" button with menu, "-" disabled button with menu
        document.querySelectorAll('[data-tools]').forEach(bar => {
            bar.innerHTML = bar.dataset.tools.split(' ').map(item => {
                if (item === '|') return '<span class="flex h-[14px] w-1 justify-center"><i class="h-full border-l-2 border-dotted border-[#b4b4b4]"></i></span>';
                if (item === ':') return '<span class="flex h-[21px] w-1 justify-center"><i class="h-full border-l border-[#c2c2c2]"></i></span>';
                const name = item.replace(/[+-]/, '');
                const icon = `<svg class="size-[15px] shrink-0"><use href="#${name}"/></svg>`;
                if (item === name) return `<button type="button" aria-label="${name}" class="grid h-5 w-[23px] place-items-center">${icon}</button>`;
                const color = item.endsWith('-') ? 'text-[#999]' : 'text-[#222]';
                return `<button type="button" aria-label="${name}" class="flex h-5 w-7 items-center pl-[6px] ${color}">${icon}<svg class="mt-[6px] h-1 w-[5px]"><use href="#down"/></svg></button>`;
            }).join('');
        });

        document.querySelectorAll('[data-dock]').forEach(box => {
            box.innerHTML = ['dock', 'float', 'cross'].map(name =>
                `<button type="button" aria-label="${name}" class="grid size-2 place-items-center bg-[#dedede] ${name === 'cross' ? 'text-[#333]' : ''}"><svg class="size-[7px]"><use href="#${name}"/></svg></button>`
            ).join('');
        });
    </script>
</body>
</html>
